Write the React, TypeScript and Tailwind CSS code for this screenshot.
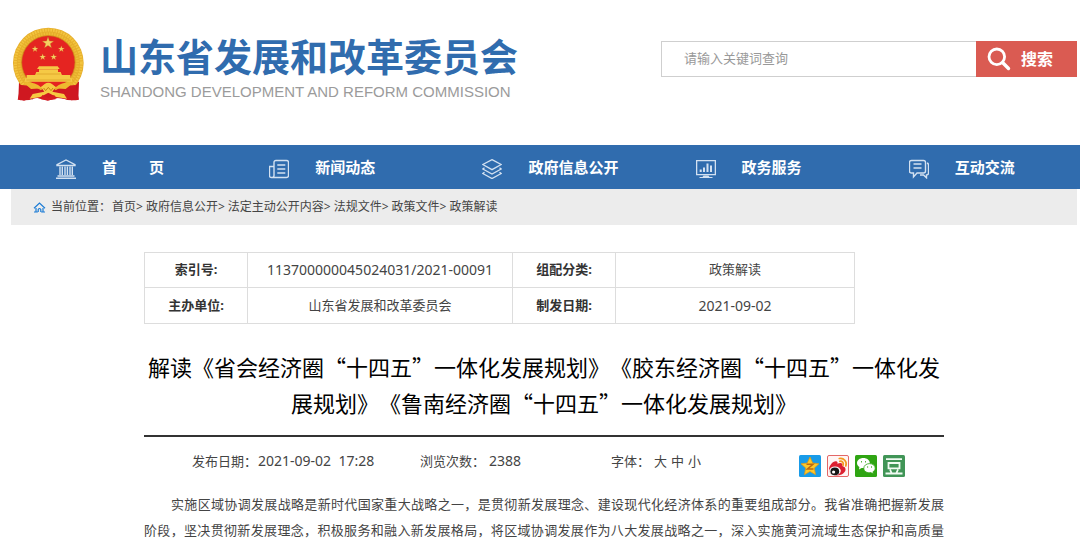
import type { ReactNode } from "react";

const navItems = [
  {
    label: "首页",
    icon: (
      <>
        <path d="M1 6.5V5.6L10 1l9 4.6v.9zM1.5 17h17M0 19.3h20" />
        <path d="M4 7.5V16M6.3 7.5V16M9 7.5V16M11.4 7.5V16M14 7.5V16M16.3 7.5V16" />
      </>
    ),
  },
  {
    label: "新闻动态",
    icon: (
      <>
        <path d="M5 16.5V3.5Q5 1.5 7 1.5h10.5q2 0 2 2v13q0 2-2 2h-15q-2 0-2-2V7.5H5M5 16.5q0 2-2 2" />
        <path d="M8.3 6h8M8.3 10h8M8.3 14h8" />
      </>
    ),
  },
  {
    label: "政府信息公开",
    icon: (
      <>
        <path d="M10 .7l9.2 4.8L10 10.6.8 5.5z" />
        <path d="M2.5 8.8L.8 10l9.2 5 9.2-5-1.7-1.2M2.5 13.2L.8 14.5l9.2 5 9.2-5-1.7-1.3" />
      </>
    ),
  },
  {
    label: "政务服务",
    icon: (
      <>
        <path d="M.6 1.6h18.8v14H.6z" />
        <path d="M4.7 10.5V13M8 8.5V13M11.5 4.5V13M15 6.5V13" strokeWidth="2" />
        <path d="M7.5 16.5h5l1 1.5h3v1h-13v-1h3z" fill="currentColor" stroke="none" />
      </>
    ),
  },
  {
    label: "互动交流",
    icon: (
      <>
        <path d="M2.5 1.5h12q2 0 2 2V12q0 2-2 2H8l-3.5 4v-4h-2q-2 0-2-2V3.5q0-2 2-2z" />
        <path d="M4.5 5h8M4.5 9h8M18 4q1.5.5 1.5 2v8q0 2-2 2v2.8L14.5 16H11" />
      </>
    ),
  },
];

const crumbs = ["首页", "政府信息公开", "法定主动公开内容", "法规文件", "政策文件", "政策解读"];

const star = "M0-10 2.4-3.2 9.5-3.1 3.8 1.2 5.9 8.1 0 4 -5.9 8.1 -3.8 1.2 -9.5-3.1 -2.4-3.2z";

function Emblem() {
  return (
    <svg viewBox="24 22 213 225" className="h-[75px] w-[71px] shrink-0" aria-hidden="true">
      <path d="M50 176l160 0 12 12-2 50-20 4-18-4-25-3-29 8-31-8-26 3-14 5-17-6 2-50z" fill="#c91420" />
      <path d="M60 207l11 29M77 216l5 23M196 207l-12 29M211 203l-8 28" stroke="#8f0e15" strokeWidth="4" />
      <circle cx="130" cy="130" r="106" fill="#e6ae2b" />
      <circle cx="130" cy="130" r="99" fill="none" stroke="#f3c53f" strokeWidth="9" strokeDasharray="5 3" />
      <circle cx="130" cy="130" r="88" fill="none" stroke="#eebd36" strokeWidth="8" strokeDasharray="4 4" />
      <circle cx="130" cy="128" r="80" fill="#e52421" stroke="#c98417" strokeWidth="2" />
      <g fill="#f5cf62" stroke="#b9761b" strokeWidth="0.5">
        <path d={star} transform="translate(129 70) scale(1.8)" />
        <path d={star} transform="translate(90 88)" />
        <path d={star} transform="translate(169 88)" />
        <path d={star} transform="translate(113 112)" />
        <path d={star} transform="translate(146 112)" />
      </g>
      <path d="M102 140h56l6 8H96zM102 149h57v8h-57zM94 157h73l4 10H90zM65 166h131v10h5v10H60v-10h5z" fill="#f5c945" />
      <path d="M64 181h133M94 163h72" stroke="#d89a22" strokeWidth="2" />
      <path d="M48 196q42 2 60 16l22-20 22 20q18-14 60-16l10 44q-30 6-54-6l-38 4-38-4q-24 12-54 6z" fill="#cf1820" />
      <path d="M54 188q38-2 53 14l23-12 23 12q16-16 54-14l-25 20-37-2-15 14-15-14-37 2z" fill="#eeb82f" />
      <path d="M108 203q22-28 44 0l-10 13 35 7 9 14-32-5-24-13-24 13-32 5 9-14 35-7z" fill="#f6ca42" />
      <path d="M116 205l6 8 8-10 8 10 6-8" fill="none" stroke="#c88418" strokeWidth="3" />
      <path d="M112 226l18 8 18-8 4 13-22 3-22-3z" fill="#d71b22" />
    </svg>
  );
}

function ShareButton({ label, children }: { label: string; children: ReactNode }) {
  return (
    <button type="button" aria-label={label} className="block">
      <svg viewBox="0 0 22 22" className="size-[22px]">
        {children}
      </svg>
    </button>
  );
}

function Header() {
  return (
    <header className="flex items-start justify-between pt-[27px] pr-[3px] pb-[42px] pl-[13px]">
      <div className="flex">
        <Emblem />
        <div className="ml-4 pt-1">
          <h1 className="text-[38px] leading-[50px] font-bold text-[#306cae]">山东省发展和改革委员会</h1>
          <p className="font-['Liberation_Sans',sans-serif] text-[15px] leading-[22px] text-[#9b9b9b]">
            SHANDONG DEVELOPMENT AND REFORM COMMISSION
          </p>
        </div>
      </div>
      <form className="mt-[14px] flex h-9 w-[416px]" onSubmit={(e) => e.preventDefault()}>
        <input
          type="text"
          aria-label="关键词"
          placeholder="请输入关键词查询"
          className="min-w-0 flex-1 border border-r-0 border-[#cfcfcf] bg-white px-[22px] text-[13px] outline-none placeholder:text-[#999]"
        />
        <button
          type="submit"
          className="flex w-[101px] items-center bg-[#da5b52] pl-[11px] text-base font-bold text-white"
        >
          <svg viewBox="0 0 24 24" className="mr-[10px] size-6" fill="none" stroke="currentColor" strokeLinecap="round">
            <circle cx="9.8" cy="9.8" r="7.8" strokeWidth="2.8" />
            <path d="M15.8 15.8l5.7 5.7" strokeWidth="3.4" />
          </svg>
          搜索
        </button>
      </form>
    </header>
  );
}

function Navigation() {
  return (
    <nav className="bg-[#306cae] pr-[3px] pl-[11px]">
      <ul className="flex h-11">
        {navItems.map((item) => (
          <li key={item.label} className="flex-1">
            <a href="#" className="flex h-full items-center pl-[45px] text-[15px] font-bold text-white">
              <svg
                viewBox="0 0 20 20"
                className="mt-1 mr-[26px] size-5 text-[#d3e1f1]"
                fill="none"
                stroke="currentColor"
                strokeWidth="1.4"
              >
                {item.icon}
              </svg>
              {item.label === "首页" ? (
                <span className="flex gap-8">
                  <span>首</span>
                  <span>页</span>
                </span>
              ) : (
                <span>{item.label}</span>
              )}
            </a>
          </li>
        ))}
      </ul>
    </nav>
  );
}

function Breadcrumb() {
  return (
    <div className="mr-[3px] ml-[11px] flex h-9 items-center bg-[#ececec] pl-[22px] text-xs text-[#444]">
      <svg viewBox="0 0 13 11" className="mr-[5px] h-[11px] w-[13px]" fill="none" stroke="#1c7cd5" strokeWidth="1.2">
        <path d="M1 6.2L6.5 1 12 6.2M3 6v4M10 6v4M5.2 10V7.5q1.3-2 2.6 0V10M1 10h3.8M8.2 10H12" />
      </svg>
      <span>当前位置：</span>
      <ol className="ml-px flex gap-[3px]">
        {crumbs.map((crumb, i) => (
          <li key={crumb}>
            <a href="#">{crumb}</a>
            {i < crumbs.length - 1 && <span>&gt;</span>}
          </li>
        ))}
      </ol>
    </div>
  );
}

function InfoTable() {
  return (
    <table className="w-[711px] max-w-full table-fixed border-collapse text-center text-[13px] text-[#444] [&_td]:border [&_td]:border-[#ddd] [&_th]:border [&_th]:border-[#ddd] [&_th]:text-[#333]">
      <colgroup>
        <col className="w-[103px]" />
        <col className="w-[265px]" />
        <col className="w-[103px]" />
        <col />
      </colgroup>
      <tbody>
        <tr className="h-[35px]">
          <th scope="row">索引号:</th>
          <td className="text-sm">113700000045024031/2021-00091</td>
          <th scope="row">组配分类:</th>
          <td>政策解读</td>
        </tr>
        <tr className="h-9">
          <th scope="row">主办单位:</th>
          <td>山东省发展和改革委员会</td>
          <th scope="row">制发日期:</th>
          <td className="text-sm">2021-09-02</td>
        </tr>
      </tbody>
    </table>
  );
}

function ArticleMeta() {
  return (
    <div className="flex h-[54px] items-start pt-[13px] pl-12 text-[13px] leading-[22px] text-[#444]">
      <p className="w-[228px]">
        发布日期：<span className="ml-px text-sm leading-[22px] whitespace-pre">2021-09-02  17:28</span>
      </p>
      <p className="w-[191px]">
        浏览次数：<span className="ml-1 text-sm leading-[22px]">2388</span>
      </p>
      <div className="flex w-[188px] gap-1">
        <span>字体：</span>
        <button type="button">大</button>
        <button type="button">中</button>
        <button type="button">小</button>
      </div>
      <div className="mt-[5px] flex gap-[6px]">
        <ShareButton label="QQ空间">
          <rect width="22" height="22" rx="1.5" fill="#199be8" />
          <path d="M11 2l2.7 6 6.3.8-4.7 4.3 1.3 6.6-5.6-3.3-5.6 3.3 1.3-6.6L2 8.8 8.3 8z" fill="#fdc82a" stroke="#e8960c" strokeWidth="0.7" />
          <path d="M7.5 9.3h6.5l-5.5 4.6h6" fill="none" stroke="#bb6812" strokeWidth="1.5" />
        </ShareButton>
        <ShareButton label="新浪微博">
          <rect x=".5" y=".5" width="21" height="21" rx="1.5" fill="#fff5f4" stroke="#e36767" />
          <path d="M2 14.5C2 10 7 5 9.8 6.6c1 .6.8 1.6.6 2.2 3-1.5 6-.8 5 2.3 4.7 1.3 4 6.3-.8 8.3C9 21.7 2 20 2 14.5z" fill="#dc2030" />
          <ellipse cx="8" cy="15.8" rx="5.8" ry="4.4" fill="#fff" />
          <ellipse cx="7.8" cy="16.4" rx="4.4" ry="3.8" fill="#171717" />
          <circle cx="6.6" cy="17" r="1.6" fill="#fff" />
          <path d="M12.3 3.5c4.5-.9 8 3 6.5 7.4M12.8 6.3c2.4-.5 4.1 1.5 3.3 3.8" fill="none" stroke="#f39a1e" strokeWidth="1.7" strokeLinecap="round" />
        </ShareButton>
        <ShareButton label="微信">
          <rect width="22" height="22" rx="1.5" fill="#2fa513" />
          <path d="M8.4 3C4.7 3 2 5.3 2 8.1c0 1.7.9 3.1 2.4 4L4 14.5l2.6-1.6c3.9.8 8.2-1 8.2-4.8C14.8 5.3 12 3 8.4 3z" fill="#fff" />
          <path d="M14.6 8.6c-3.3 0-5.8 2-5.8 4.6 0 3.2 3.3 5.1 7 4.4l2.6 1.4-.5-2.2c1.5-.8 2.3-2.1 2.3-3.6 0-2.6-2.4-4.6-5.6-4.6z" fill="#fff" stroke="#2fa513" strokeWidth="0.8" />
          <path d="M6 6.7h.8M10.2 6.7h.8M12.3 12h.8M16.2 12h.8" stroke="#2fa513" strokeWidth="1.5" />
        </ShareButton>
        <ShareButton label="豆瓣">
          <rect width="22" height="22" rx="1.5" fill="#419557" />
          <path d="M3 4.2h16M5.5 8h11v5.3h-11zM7 14.5l1.5 3.3M15 14.5l-1.5 3.3M2.5 18.5h17" fill="none" stroke="#f1fbf3" strokeWidth="1.8" />
        </ShareButton>
      </div>
    </div>
  );
}

export default function App() {
  return (
    <div
      lang="zh-CN"
      className="bg-white font-['Noto_Sans','Noto_Sans_CJK_SC',sans-serif] [text-spacing-trim:space-all]"
    >
      <Header />
      <Navigation />
      <Breadcrumb />
      <main className="mr-[3px] ml-[11px] pt-[27px]">
        <article className="mx-auto max-w-[800px]">
          <InfoTable />
          <h2 className="mt-6 border-b-2 border-[#333] pb-[15px] text-center font-['Noto_Sans_CJK_SC',sans-serif] text-[22px] leading-9 text-black">
            解读《省会经济圈“十四五”一体化发展规划》《胶东经济圈“十四五”一体化发展规划》《鲁南经济圈“十四五”一体化发展规划》
          </h2>
          <ArticleMeta />
          <p className="indent-[27px] text-[13px] leading-[26px] text-[#444] [text-align-last:justify]">
            实施区域协调发展战略是新时代国家重大战略之一，是贯彻新发展理念、建设现代化经济体系的重要组成部分。我省准确把握新发展
            <br />
            阶段，坚决贯彻新发展理念，积极服务和融入新发展格局，将区域协调发展作为八大发展战略之一，深入实施黄河流域生态保护和高质量
          </p>
        </article>
      </main>
    </div>
  );
}
